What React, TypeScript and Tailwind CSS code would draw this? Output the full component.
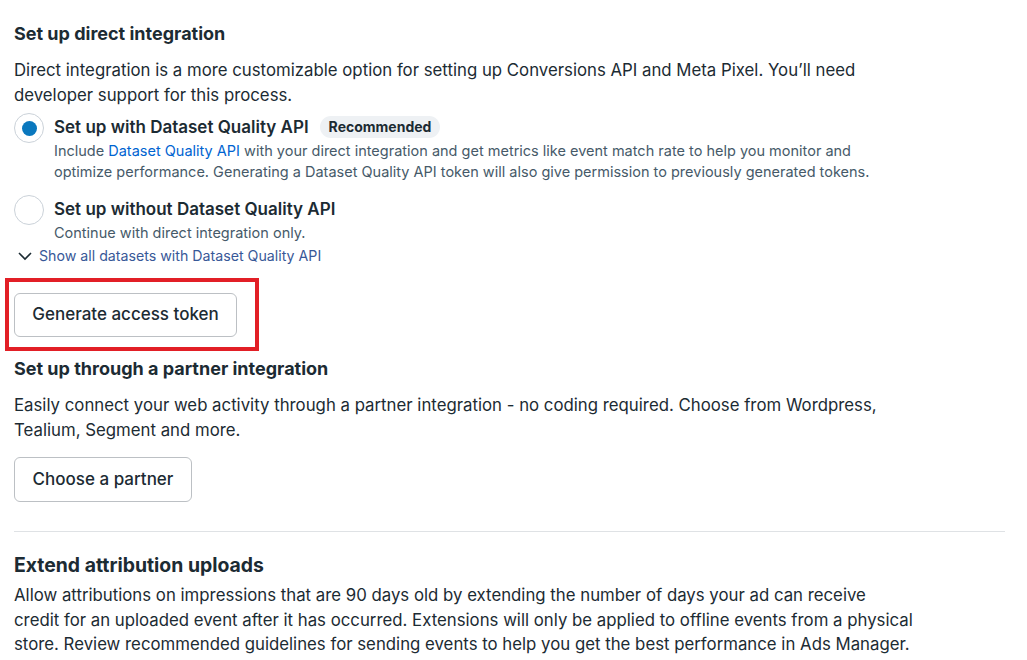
import React from "react";

const font = { fontFamily: "Inter, 'Noto Sans', sans-serif" };

const Radio = ({ checked }: { checked?: boolean }) => (
  <span className="mt-[-1px] flex h-[30px] w-[30px] shrink-0 items-center justify-center rounded-full border border-[#cbd2d9] bg-white">
    {checked && <span className="h-[15px] w-[15px] rounded-full bg-[#0a78be]" />}
  </span>
);

const App = () => {
  return (
    <div className="min-h-[660px] w-full bg-white text-[#1c2b33]" style={font}>
      <div className="pl-[14px] pr-[22px] pt-[22px]">
        {/* Direct integration */}
        <h2 className="text-[18px] font-bold leading-[24px]">Set up direct integration</h2>
        <p className="mt-[12px] text-[16.8px] leading-[25px]">
          Direct integration is a more customizable option for setting up Conversions API and Meta Pixel. You’ll need
          <br />
          developer support for this process.
        </p>

        <div className="mt-[6px] flex gap-[10px]">
          <Radio checked />
          <div>
            <div className="flex items-center gap-[11px]">
              <span className="text-[17px] font-semibold leading-[26px]">Set up with Dataset Quality API</span>
              <span className="rounded-full bg-[#eef1f4] px-[9px] text-[14px] font-bold leading-[22px]">
                Recommended
              </span>
            </div>
            <p className="text-[14.5px] leading-[21px] text-[#465a69]">
              Include <span className="text-[#0064d1]">Dataset Quality API</span> with your direct integration and get metrics like event match rate to help you monitor and
              <br />
              optimize performance. Generating a Dataset Quality API token will also give permission to previously generated tokens.
            </p>
          </div>
        </div>

        <div className="mt-[14px] flex gap-[10px]">
          <Radio />
          <div>
            <div className="text-[17px] font-semibold leading-[26px]">Set up without Dataset Quality API</div>
            <p className="text-[14.5px] leading-[21px] text-[#465a69]">Continue with direct integration only.</p>
          </div>
        </div>

        <div className="mt-[2px] flex items-center gap-[6px] pl-[3px] text-[14.2px] leading-[22px] text-[#385898]">
          <svg width="16" height="16" viewBox="0 0 16 16" fill="none" stroke="#1c2b33" strokeWidth="1.6">
            <path d="M2 5l6 6 6-6" />
          </svg>
          <span>Show all datasets with Dataset Quality API</span>
        </div>

        {/* highlighted token button */}
        <div className="ml-[-9px] mt-[11px] w-[254px] border-[4px] border-[#e21f26] px-[5px] pb-[10px] pt-[11px]">
          <button className="h-[44px] w-[223px] rounded-[6px] border border-[#bcc0c4] bg-white text-[17px] font-medium">
            Generate access token
          </button>
        </div>

        {/* Partner integration */}
        <h2 className="mt-[6px] text-[18px] font-bold leading-[24px]">Set up through a partner integration</h2>
        <p className="mt-[12px] text-[16.8px] leading-[25px]">
          Easily connect your web activity through a partner integration - no coding required. Choose from Wordpress,
          <br />
          Tealium, Segment and more.
        </p>
        <button className="mt-[14px] h-[45px] w-[178px] rounded-[6px] border border-[#bcc0c4] bg-white text-[17px] font-medium">
          Choose a partner
        </button>

        <hr className="mt-[29px] border-[#dfe2e5]" />

        {/* Attribution */}
        <h2 className="mt-[20px] text-[19.4px] font-bold leading-[26px]">Extend attribution uploads</h2>
        <p className="mt-[5px] text-[16.8px] leading-[24.5px]">
          Allow attributions on impressions that are 90 days old by extending the number of days your ad can receive
          <br />
          credit for an uploaded event after it has occurred. Extensions will only be applied to offline events from a physical
          <br />
          store. Review recommended guidelines for sending events to help you get the best performance in Ads Manager.
        </p>
      </div>
    </div>
  );
};

export default App;
